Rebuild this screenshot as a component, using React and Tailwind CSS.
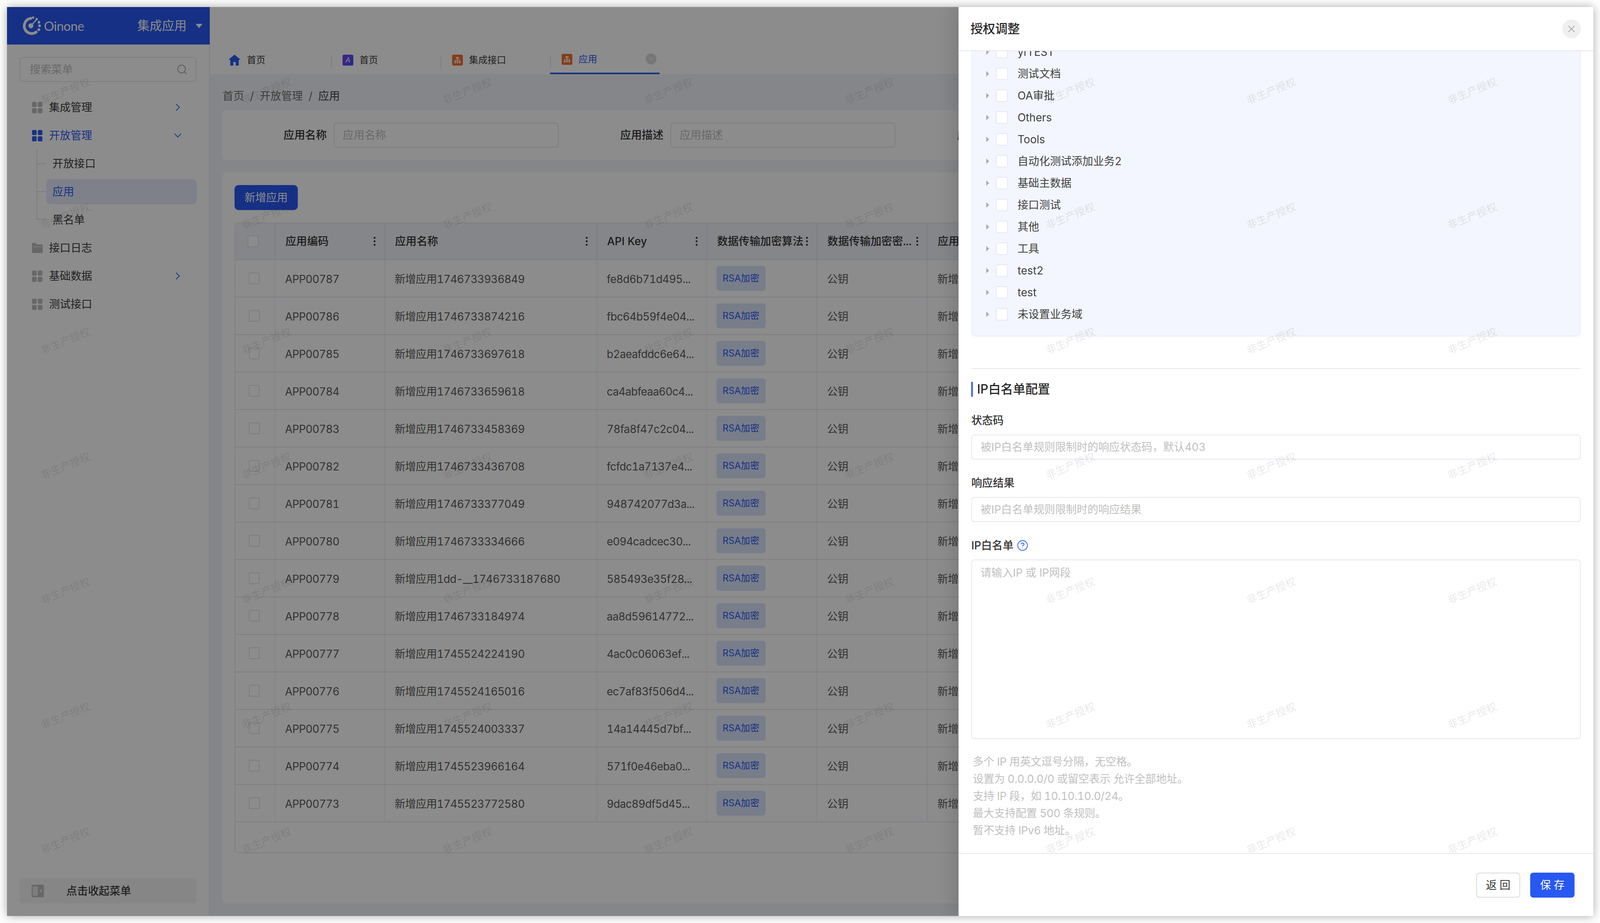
import React from "react";
import { Search, ChevronRight, ChevronDown, X, CircleHelp } from "lucide-react";

const rows = [
  ["APP00787", "新增应用1746733936849", "fe8d6b71d495..."],
  ["APP00786", "新增应用1746733874216", "fbc64b59f4e04..."],
  ["APP00785", "新增应用1746733697618", "b2aeafddc6e64..."],
  ["APP00784", "新增应用1746733659618", "ca4abfeaa60c4..."],
  ["APP00783", "新增应用1746733458369", "78fa8f47c2c04..."],
  ["APP00782", "新增应用1746733436708", "fcfdc1a7137e4..."],
  ["APP00781", "新增应用1746733377049", "948742077d3a..."],
  ["APP00780", "新增应用1746733334666", "e094cadcec30..."],
  ["APP00779", "新增应用1dd-__1746733187680", "585493e35f28..."],
  ["APP00778", "新增应用1746733184974", "aa8d59614772..."],
  ["APP00777", "新增应用1745524224190", "4ac0c06063ef..."],
  ["APP00776", "新增应用1745524165016", "ec7af83f506d4..."],
  ["APP00775", "新增应用1745524003337", "14a14445d7bf..."],
  ["APP00774", "新增应用1745523966164", "571f0e46eba0..."],
  ["APP00773", "新增应用1745523772580", "9dac89df5d45..."],
];

const treeItems = [
  "yrTEST",
  "测试文档",
  "OA审批",
  "Others",
  "Tools",
  "自动化测试添加业务2",
  "基础主数据",
  "接口测试",
  "其他",
  "工具",
  "test2",
  "test",
  "未设置业务域",
];

const helpLines = [
  "多个 IP 用英文逗号分隔，无空格。",
  "设置为 0.0.0.0/0 或留空表示 允许全部地址。",
  "支持 IP 段，如 10.10.10.0/24。",
  "最大支持配置 500 条规则。",
  "暂不支持 IPv6 地址。",
];

const gridCols = "grid grid-cols-[104px_284px_550px_285px_286px_286px_1fr]";

const GridIcon = ({ active }) => (
  <svg width="28" height="29" viewBox="0 0 28 29" className={active ? "text-[#2a5cf0]" : "text-[#bcbcbc]"}>
    <rect x="0" y="0" width="12" height="13" rx="3" fill="currentColor" />
    <rect x="15" y="0" width="12" height="13" rx="3" fill="currentColor" />
    <rect x="0" y="16" width="12" height="13" rx="3" fill="currentColor" />
    <rect x="15" y="16" width="12" height="13" rx="3" fill="currentColor" />
  </svg>
);

const FolderIcon = () => (
  <svg width="28" height="26" viewBox="0 0 28 26" className="text-[#bcbcbc]">
    <path d="M0 3a3 3 0 0 1 3-3h6l4 4h12a3 3 0 0 1 3 3v16a3 3 0 0 1-3 3H3a3 3 0 0 1-3-3z" fill="currentColor" />
    <rect x="4" y="9" width="20" height="2" fill="#e8e8e8" />
  </svg>
);

const Logo = () => (
  <svg width="48" height="48" viewBox="0 0 48 48" className="text-white">
    <path d="M22 5A19.5 19.5 0 1 0 36 40" fill="none" stroke="currentColor" strokeWidth="7" strokeLinecap="round" />
    <circle cx="22" cy="24" r="6.5" fill="currentColor" />
    <path d="M22 24L37 8" stroke="currentColor" strokeWidth="3" />
    <circle cx="37" cy="7" r="3" fill="currentColor" />
    <circle cx="28" cy="3" r="3" fill="currentColor" />
    <circle cx="43" cy="15" r="3.4" fill="currentColor" />
    <circle cx="44.5" cy="24" r="3.6" fill="currentColor" />
    <circle cx="42.7" cy="34" r="3.6" fill="currentColor" />
  </svg>
);

const HomeIcon = () => (
  <svg width="32" height="28" viewBox="0 0 32 28">
    <path d="M16 0L32 13H27V28H19V19H13V28H5V13H0Z" fill="#2a5cf0" />
  </svg>
);

const OrangeIcon = () => (
  <svg width="28" height="28" viewBox="0 0 28 28">
    <rect width="28" height="28" rx="4" fill="#f0702a" />
    <g fill="#fff" opacity="0.9">
      <rect x="10" y="6" width="8" height="4" />
      <rect x="13" y="10" width="2" height="3" />
      <rect x="7" y="13" width="14" height="2" />
      <rect x="6" y="16" width="4" height="6" />
      <rect x="12" y="16" width="4" height="6" />
      <rect x="18" y="16" width="4" height="6" />
    </g>
  </svg>
);

const Kebab = () => (
  <svg width="6" height="24" viewBox="0 0 6 24" className="shrink-0 text-[#333]">
    <circle cx="3" cy="3" r="2.5" fill="currentColor" />
    <circle cx="3" cy="12" r="2.5" fill="currentColor" />
    <circle cx="3" cy="21" r="2.5" fill="currentColor" />
  </svg>
);

const Checkbox = () => <span className="block h-[30px] w-[28px] rounded-[4px] border-2 border-[#dfe2ea] bg-white" />;

const MenuRow = ({ icon, label, active, chevron }) => (
  <div className="flex h-[72px] items-center pl-[65px] pr-[65px]">
    {icon}
    <span className={`ml-[16px] text-[28px] ${active ? "text-[#2a5cf0]" : "text-[#3c3c3c]"}`}>{label}</span>
    {chevron === "right" && <ChevronRight className="ml-auto text-[#2a5cf0]" size={32} strokeWidth={1.4} />}
    {chevron === "down" && <ChevronDown className="ml-auto text-[#2a5cf0]" size={32} strokeWidth={1.4} />}
  </div>
);

const SubRow = ({ label, active, last }) => (
  <div className="relative flex h-[72px] items-center pl-[102px] pr-[32px]">
    <span className={`absolute left-[77px] top-0 w-[25px] border-l-2 border-[#dfe1e6] ${last ? "h-[36px] border-b-2" : "h-[72px]"}`} />
    <span className={`absolute left-[77px] top-[35px] h-[2px] w-[25px] bg-[#dfe1e6] ${last ? "hidden" : ""}`} />
    <span
      className={`flex h-[64px] w-full items-center rounded-[10px] pl-[16px] text-[28px] ${
        active ? "bg-[#e5eafb] text-[#2a5cf0]" : "text-[#3c3c3c]"
      }`}
    >
      {label}
    </span>
  </div>
);

const Sidebar = () => (
  <aside className="flex w-[526px] shrink-0 flex-col border-r-2 border-[#e8eaf0] bg-white">
    <div className="flex h-[96px] w-[526px] items-center bg-[#2858f2] pl-[40px] pr-[19px] text-white">
      <Logo />
      <span className="ml-[8px] font-['Lato',sans-serif] text-[33px] leading-none tracking-[-0.5px]">Oinone</span>
      <span className="ml-auto text-[32px]">集成应用</span>
      <span className="ml-[23px] h-0 w-0 border-x-[9px] border-t-[11px] border-x-transparent border-t-white" />
    </div>
    <div className="mx-[33px] mt-[32px] flex h-[64px] items-center rounded-[8px] border-2 border-[#e3e5ec] pl-[24px] pr-[20px]">
      <input placeholder="搜索菜单" className="w-full bg-transparent text-[28px] outline-none placeholder:text-[#bfbfbf]" />
      <Search className="shrink-0 text-[#a8a8a8]" size={30} strokeWidth={1.6} />
    </div>
    <nav className="mt-[29px]">
      <MenuRow icon={<GridIcon />} label="集成管理" chevron="right" />
      <MenuRow icon={<GridIcon active />} label="开放管理" active chevron="down" />
      <SubRow label="开放接口" />
      <SubRow label="应用" active />
      <SubRow label="黑名单" last />
      <MenuRow icon={<FolderIcon />} label="接口日志" />
      <MenuRow icon={<GridIcon />} label="基础数据" chevron="right" />
      <MenuRow icon={<GridIcon />} label="测试接口" />
    </nav>
    <div className="mx-[33px] mb-[32px] mt-auto flex h-[64px] items-center rounded-[8px] bg-[#f5f5f5] pl-[31px]">
      <svg width="32" height="32" viewBox="0 0 32 32">
        <rect width="32" height="32" rx="3" fill="#bcbcbc" />
        <rect x="3" y="4" width="13" height="24" fill="#e4e4e4" />
        <path d="M26 11V21L21 16Z" fill="#f2f2f2" />
      </svg>
      <span className="ml-[58px] text-[28px] font-medium text-[#3c3c3c]">点击收起菜单</span>
    </div>
  </aside>
);

const Tab = ({ icon, label, active, first }) => (
  <div
    className={`relative flex h-[76px] w-[284px] items-center gap-[16px] pt-[4px] ${first ? "pl-[18px]" : "pl-[30px]"} ${
      active ? "border-b-4 border-[#2858f2]" : ""
    }`}
  >
    {!first && <span className="absolute left-0 top-[28px] h-[33px] w-[2px] bg-[#e4e4e4]" />}
    {icon}
    <span className={`text-[24px] ${active ? "text-[#2a5cf0]" : "text-[#3c3c3c]"}`}>{label}</span>
    {active && (
      <span className="ml-auto mr-[8px] flex h-[28px] w-[28px] -translate-y-[1px] items-center justify-center rounded-full bg-[#d8d8d8]">
        <X className="text-white" size={16} strokeWidth={1.2} />
      </span>
    )}
  </div>
);

const SearchField = ({ label, placeholder, labelWidth }) => (
  <div className="flex shrink-0 items-center gap-[18px]">
    <span className={`text-right text-[28px] font-medium text-[#333] ${labelWidth}`}>{label}</span>
    <input
      placeholder={placeholder}
      className="h-[64px] w-[583px] rounded-[8px] border-2 border-[#e3e5ec] bg-white pl-[22px] text-[28px] outline-none placeholder:text-[#bfbfbf]"
    />
  </div>
);

const HeaderCell = ({ label }) => (
  <div className="flex min-w-0 items-center justify-between border-r-2 border-[#e4e6ee] pl-[26px] pr-[22px]">
    <span className="truncate text-[28px] font-medium text-[#333]">{label}</span>
    <Kebab />
  </div>
);

const Cell = ({ children }) => (
  <div className="flex items-center overflow-hidden whitespace-nowrap border-r-2 border-[#eceef3] pl-[25px] text-[28px] tracking-[-0.65px] text-[#5c5c5c]">
    <span className="pt-[3px]">{children}</span>
  </div>
);

const Table = () => (
  <div className="mt-[32px] ml-[32px] h-[1615px] rounded-t-[10px] rounded-bl-[10px] border-y-2 border-l-2 border-[#e4e6ee]">
    <div className={`${gridCols} h-[94px] border-b-2 border-[#e4e6ee] bg-[#f2f4fa]`}>
      <div className="flex items-center border-r-2 border-[#e4e6ee] pl-[32px]">
        <Checkbox />
      </div>
      <HeaderCell label="应用编码" />
      <HeaderCell label="应用名称" />
      <HeaderCell label="API Key" />
      <HeaderCell label="数据传输加密算法" />
      <HeaderCell label="数据传输加密密..." />
      <HeaderCell label="应用描述" />
    </div>
    {rows.map((row) => (
      <div key={row[0]} className={`${gridCols} h-[96px] border-b-2 border-[#e4e6ee]`}>
        <div className="flex items-center border-r-2 border-[#eceef3] pl-[35px]">
          <Checkbox />
        </div>
        <Cell>{row[0]}</Cell>
        <Cell>{row[1]}</Cell>
        <Cell>{row[2]}</Cell>
        <div className="flex items-center border-r-2 border-[#eceef3] pl-[24px]">
          <span className="flex h-[64px] w-[128px] items-center justify-center rounded-[8px] bg-[#dbe3fb] text-[24px] text-[#2a5cf0]">
            RSA加密
          </span>
        </div>
        <Cell>公钥</Cell>
        <Cell>新增应用</Cell>
      </div>
    ))}
  </div>
);

const Main = () => (
  <main className="flex min-w-0 flex-1 flex-col bg-[#f2f4fa]">
    <div className="h-[172px] shrink-0 bg-white pl-[30px] pt-[96px]">
      <div className="flex">
        <Tab first icon={<HomeIcon />} label="首页" />
        <Tab
          icon={
            <span className="flex h-[28px] w-[28px] items-center justify-center rounded-[4px] bg-gradient-to-br from-[#7b3ff2] to-[#3a52e8] font-['Liberation_Sans',sans-serif] text-[18px] italic leading-none text-white">
              A
            </span>
          }
          label="首页"
        />
        <Tab icon={<OrangeIcon />} label="集成接口" />
        <Tab active icon={<OrangeIcon />} label="应用" />
      </div>
    </div>
    <div className="flex h-[92px] shrink-0 items-start gap-[15px] pl-[33px] pt-[36px] text-[28px] leading-[40px] text-[#707070]">
      <span>首页</span>
      <span>/</span>
      <span>开放管理</span>
      <span>/</span>
      <span className="text-[#3c3c3c]">应用</span>
    </div>
    <div className="ml-[32px] mr-[32px] flex h-[128px] shrink-0 items-center overflow-hidden rounded-[12px] bg-white">
      <SearchField label="应用名称" placeholder="应用名称" labelWidth="w-[271px]" />
      <SearchField label="应用描述" placeholder="应用描述" labelWidth="w-[272px]" />
      <SearchField label="应用编码" placeholder="应用编码" labelWidth="w-[272px]" />
    </div>
    <div className="mb-[32px] ml-[32px] mr-[32px] mt-[32px] flex-1 overflow-hidden rounded-[12px] bg-white pt-[32px]">
      <button className="ml-[32px] h-[64px] w-[164px] rounded-[10px] bg-[#2858f2] text-[28px] text-white">新增应用</button>
      <Table />
    </div>
  </main>
);

const Field = ({ label, placeholder }) => (
  <div className="mb-[40px]">
    <div className="mb-[16px] h-[40px] text-[28px] font-medium leading-[40px] text-[#333]">{label}</div>
    <input
      placeholder={placeholder}
      className="h-[64px] w-full rounded-[8px] border-2 border-[#e5e8f0] pl-[22px] text-[28px] outline-none placeholder:text-[#bfbfbf]"
    />
  </div>
);

const Drawer = () => (
  <section className="absolute bottom-0 right-0 top-0 flex w-[1646px] flex-col bg-white shadow-[-14px_0_40px_rgba(0,0,0,0.12)]">
    <header className="flex h-[113px] shrink-0 items-center justify-between border-b-2 border-[#e5e8f0] pl-[31px] pr-[33px]">
      <h2 className="text-[32px] font-medium text-[#262626]">授权调整</h2>
      <button className="flex h-[48px] w-[48px] items-center justify-center rounded-full bg-[#f0f0f0]">
        <X className="text-[#a6a6a6]" size={30} strokeWidth={1.5} />
      </button>
    </header>
    <div className="min-h-0 flex-1 overflow-hidden px-[33px]">
      <div className="-mt-[28px] rounded-[10px] border-2 border-[#eceffa] bg-[#f3f6fe] pb-[27px]">
        {treeItems.map((item) => (
          <div key={item} className="flex h-[56px] items-center pl-[37px]">
            <span className="h-0 w-0 border-y-[7px] border-l-[7px] border-y-transparent border-l-[#a6a6a6]" />
            <span className="ml-[18px] block h-[32px] w-[31px] rounded-[5px] border-2 border-[#e5e8f0] bg-white" />
            <span className="ml-[25px] text-[28px] text-[#404040]">{item}</span>
          </div>
        ))}
      </div>
      <div className="mt-[81px] h-[2px] bg-[#e5e8f0]" />
      <h3 className="mb-[41px] mt-[33px] border-l-4 border-[#2858f2] pl-[11px] text-[32px] font-medium leading-[38px] text-[#262626]">
        IP白名单配置
      </h3>
      <Field label="状态码" placeholder="被IP白名单规则限制时的响应状态码，默认403" />
      <Field label="响应结果" placeholder="被IP白名单规则限制时的响应结果" />
      <div className="mb-[16px] flex h-[40px] items-center gap-[8px] text-[28px] font-medium text-[#333]">
        IP白名单
        <CircleHelp className="text-[#2858f2]" size={30} strokeWidth={1.5} />
      </div>
      <textarea
        placeholder="请输入IP 或 IP网段"
        className="block h-[460px] w-full resize-none rounded-[8px] border-2 border-[#e5e8f0] pl-[22px] pt-[12px] text-[28px] leading-[40px] outline-none placeholder:text-[#bfbfbf]"
      />
      <div className="mt-[36px] pl-[4px] text-[28px] leading-[44px] tracking-[-0.3px] text-[#bfbfbf]">
        {helpLines.map((line) => (
          <p key={line}>{line}</p>
        ))}
      </div>
    </div>
    <footer className="flex h-[161px] shrink-0 justify-end gap-[26px] border-t-2 border-[#e5e8f0] pr-[49px] pt-[48px]">
      <button className="h-[64px] w-[114px] rounded-[8px] border-2 border-[#d9d9d9] text-[28px] text-[#333]">返 回</button>
      <button className="h-[64px] w-[115px] rounded-[8px] bg-[#2858f2] text-[28px] text-white">保 存</button>
    </footer>
  </section>
);

const Watermarks = () => {
  const marks = [];
  for (let col = 0; col < 8; col++) {
    for (let row = 0; row < 7; row++) {
      marks.push({ left: 152 + col * 521, top: 216 + row * 320 });
    }
  }
  return (
    <div className="pointer-events-none absolute inset-0 overflow-hidden">
      {marks.map((m) => (
        <span
          key={`${m.left}-${m.top}`}
          className="absolute -translate-x-1/2 -translate-y-1/2 -rotate-[22deg] whitespace-nowrap text-[27px] text-black/10"
          style={{ left: m.left, top: m.top }}
        >
          非生产授权
        </span>
      ))}
    </div>
  );
};

export default function App() {
  // the browser can come up narrower than the 4148px design, squeeze to fit
  const fit = Math.min(1, window.innerWidth / 4148);

  return (
    <div className="h-[2364px] w-screen overflow-hidden bg-white">
      <div
        className="h-[2364px] w-[4148px] origin-top-left bg-white pl-[18px] pt-[18px] font-['Inter','Noto_Sans_CJK_SC',sans-serif] tabular-nums"
        style={{ transform: `scaleX(${fit})` }}
      >
        <div className="relative flex h-[2328px] w-[4113px] overflow-hidden shadow-[0_0_24px_rgba(0,0,0,0.35)]">
          <Sidebar />
          <Main />
          <div className="absolute inset-0 bg-black/45" />
          <Drawer />
          <Watermarks />
        </div>
      </div>
    </div>
  );
}
